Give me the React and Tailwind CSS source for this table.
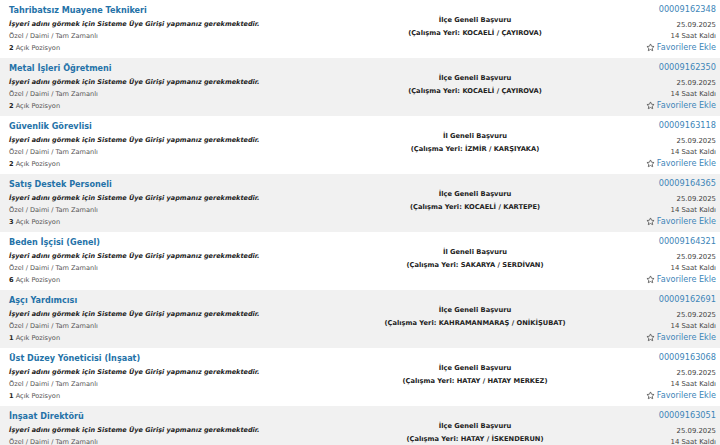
const jobs = [
  { title: 'Tahribatsız Muayene Teknikeri', scope: 'İlçe Geneli Başvuru', place: 'KOCAELİ / ÇAYIROVA', no: '00009162348', open: 2 },
  { title: 'Metal İşleri Öğretmeni', scope: 'İlçe Geneli Başvuru', place: 'KOCAELİ / ÇAYIROVA', no: '00009162350', open: 2 },
  { title: 'Güvenlik Görevlisi', scope: 'İl Geneli Başvuru', place: 'İZMİR / KARŞIYAKA', no: '00009163118', open: 2 },
  { title: 'Satış Destek Personeli', scope: 'İlçe Geneli Başvuru', place: 'KOCAELİ / KARTEPE', no: '00009164365', open: 3 },
  { title: 'Beden İşçisi (Genel)', scope: 'İl Geneli Başvuru', place: 'SAKARYA / SERDİVAN', no: '00009164321', open: 6 },
  { title: 'Aşçı Yardımcısı', scope: 'İlçe Geneli Başvuru', place: 'KAHRAMANMARAŞ / ONİKİŞUBAT', no: '00009162691', open: 1 },
  { title: 'Üst Düzey Yöneticisi (İnşaat)', scope: 'İlçe Geneli Başvuru', place: 'HATAY / HATAY MERKEZ', no: '00009163068', open: 1 },
  { title: 'İnşaat Direktörü', scope: 'İlçe Geneli Başvuru', place: 'HATAY / İSKENDERUN', no: '00009163051', open: 1 },
];

function Star() {
  return (
    <svg width="9" height="9" viewBox="0 0 24 24" fill="none" stroke="#555" strokeWidth="2.2" strokeLinejoin="round">
      <path d="M12 2.5l2.9 6.1 6.6.8-4.9 4.6 1.3 6.6L12 17.3l-5.9 3.3 1.3-6.6-4.9-4.6 6.6-.8z" />
    </svg>
  );
}

function JobRow({ job, index }) {
  return (
    <div className={`flex h-[58px] shrink-0 ${index % 2 ? 'bg-[#f1f1f1]' : 'bg-white'}`}>
      <div className="flex-1 pl-[9px] pt-[4px]">
        <div className="text-[8.1px] font-bold leading-[12px] text-[#2472a8]">{job.title}</div>
        <div className="mt-[2px] text-[6.5px] font-bold italic leading-[12px] text-[#222]">
          İşyeri adını görmek için Sisteme Üye Girişi yapmanız gerekmektedir.
        </div>
        <div className="text-[6.6px] leading-[12px] text-[#555]">Özel / Daimi / Tam Zamanlı</div>
        <div className="text-[6.6px] leading-[12px] text-[#555]">
          <span className="font-bold text-[#222]">{job.open}</span> Açık Pozisyon
        </div>
      </div>
      <div className="w-[190px] pt-[14px] text-center text-[6.7px] font-bold leading-[13px] text-[#222]">
        <div>{job.scope}</div>
        <div>(Çalışma Yeri: {job.place})</div>
      </div>
      <div className="flex w-[150px] flex-col items-end pr-[4px] pt-[3px]">
        <div className="text-[8.2px] leading-[13px] text-[#3d85b8]">{job.no}</div>
        <div className="mt-[3px] text-[6.9px] leading-[12px] text-[#444]">25.09.2025</div>
        <div className="text-[6.9px] leading-[10px] text-[#444]">14 Saat Kaldı</div>
        <div className="flex items-center gap-[2px] text-[8.1px] leading-[12px] text-[#3d85b8]">
          <Star />
          <span>Favorilere Ekle</span>
        </div>
      </div>
    </div>
  );
}

export default function App() {
  return (
    <div className="flex h-[445px] w-[720px] flex-col overflow-hidden bg-white font-['DejaVu_Sans',Verdana,sans-serif]">
      {jobs.map((job, i) => (
        <JobRow key={job.no} job={job} index={i} />
      ))}
    </div>
  );
}
